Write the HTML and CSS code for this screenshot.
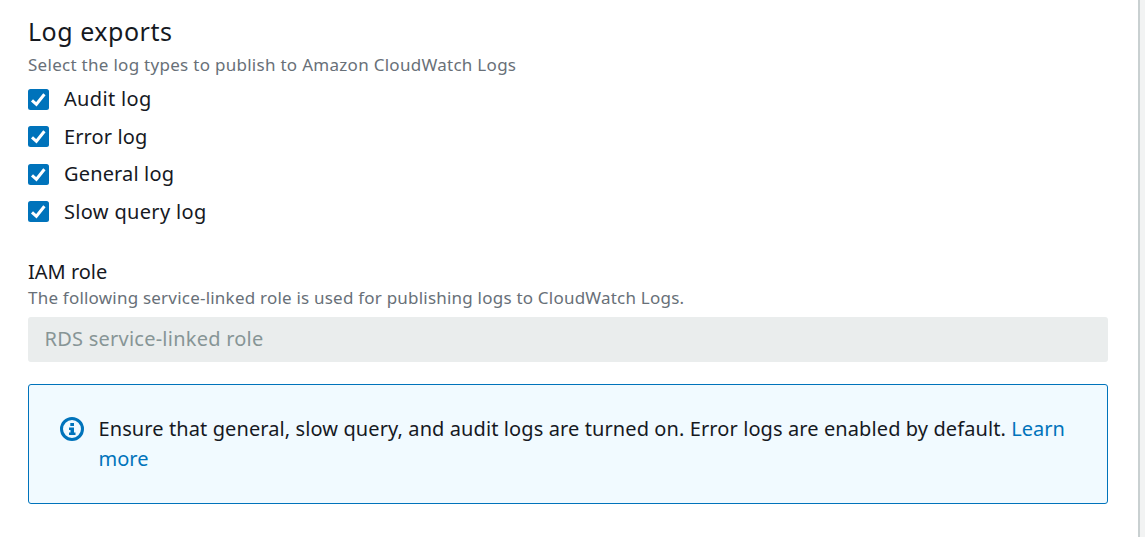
FILE: index.html
```html
<!DOCTYPE html>
<html lang="en">
<head>
<meta charset="utf-8">
<title>Log exports</title>
<link rel="stylesheet" href="styles.css">
</head>
<body>
<main class="panel">
  <h2 class="title">Log exports</h2>
  <p class="hint">Select the log types to publish to Amazon CloudWatch Logs</p>
  <div class="checks">
    <label class="check"><svg class="box" viewBox="0 0 21 21"><rect width="21" height="21" rx="2.5"/><path d="M4 11.300l4.400 4 8-10"/></svg><span class="audit">Audit log</span></label>
    <label class="check"><svg class="box" viewBox="0 0 21 21"><rect width="21" height="21" rx="2.5"/><path d="M4 11.300l4.400 4 8-10"/></svg><span class="error">Error log</span></label>
    <label class="check"><svg class="box" viewBox="0 0 21 21"><rect width="21" height="21" rx="2.5"/><path d="M4 11.300l4.400 4 8-10"/></svg><span class="general">General log</span></label>
    <label class="check"><svg class="box" viewBox="0 0 21 21"><rect width="21" height="21" rx="2.5"/><path d="M4 11.300l4.400 4 8-10"/></svg><span class="slow">Slow query log</span></label>
  </div>
  <h3 class="label">IAM role</h3>
  <p class="hint role-hint">The following service-linked role is used for publishing logs to CloudWatch Logs.</p>
  <div class="field">RDS service-linked role</div>
  <section class="alert">
    <svg class="info" viewBox="0 0 24 24"><circle cx="12" cy="12" r="10.500"/><path d="M10.300 6h3.700v3h-3.700zM9 10.500h5v5h1.500V18H9v-2.500h1.500V13H9z"/></svg>
    <p class="message">Ensure that general, slow query, and audit logs are turned on. Error logs are enabled by default. <a class="link">Learn<br>more</a></p>
  </section>
</main>
</body>
</html>
```
FILE: styles.css
```css
* { box-sizing: border-box; }
body { margin: 0; height: 537px; overflow: hidden; background: #f2f3f3; font-family: "Noto Sans", sans-serif; color: #16191f; }
.panel { width: 1140px; height: 537px; padding: 14px 32px 0 28px; background: #fff; border-right: 2px solid #c9d0d1; padding-right: 30px; }
h2, h3, p { margin: 0; font-weight: 400; white-space: nowrap; }
.title { font-size: 25px; line-height: 34px; letter-spacing: 0.52px; }
.hint { font-size: 17px; line-height: 24px; margin-top: 5px; color: #687078; letter-spacing: 0.285px; }
.checks { display: grid; grid-auto-rows: 37.5px; margin-top: 3px; }
.check { display: flex; align-items: center; gap: 15px; font-size: 20px; white-space: nowrap; }
.box { width: 21px; height: 21px; margin-top: 1px; fill: #0073bb; }
.box path { fill: none; stroke: #fff; stroke-width: 3; }
.audit { letter-spacing: 0.33px; }
.error { letter-spacing: 0.12px; }
.general { letter-spacing: 0.15px; }
.slow { letter-spacing: 0.33px; }
.label { margin-top: 27px; font-size: 20px; line-height: 30px; }
.role-hint { margin-top: -1px; letter-spacing: 0.215px; }
.field { margin-top: 7px; height: 45px; padding-left: 16.5px; background: #eaeded; color: #879596; border-radius: 3px; font-size: 20px; line-height: 43px; letter-spacing: 0.24px; }
.alert { display: flex; gap: 14.5px; margin-top: 22px; height: 120px; padding: 29px 31px; background: #f1faff; border: 1px solid #0073bb; border-radius: 3px; }
.info { width: 24px; height: 24px; margin-top: 3px; fill: #0073bb; flex: none; }
.info circle { fill: none; stroke: #0073bb; stroke-width: 3; }
.message { font-size: 20px; line-height: 30px; letter-spacing: 0.1px; }
.link { color: #0073bb; letter-spacing: 0; }
```
